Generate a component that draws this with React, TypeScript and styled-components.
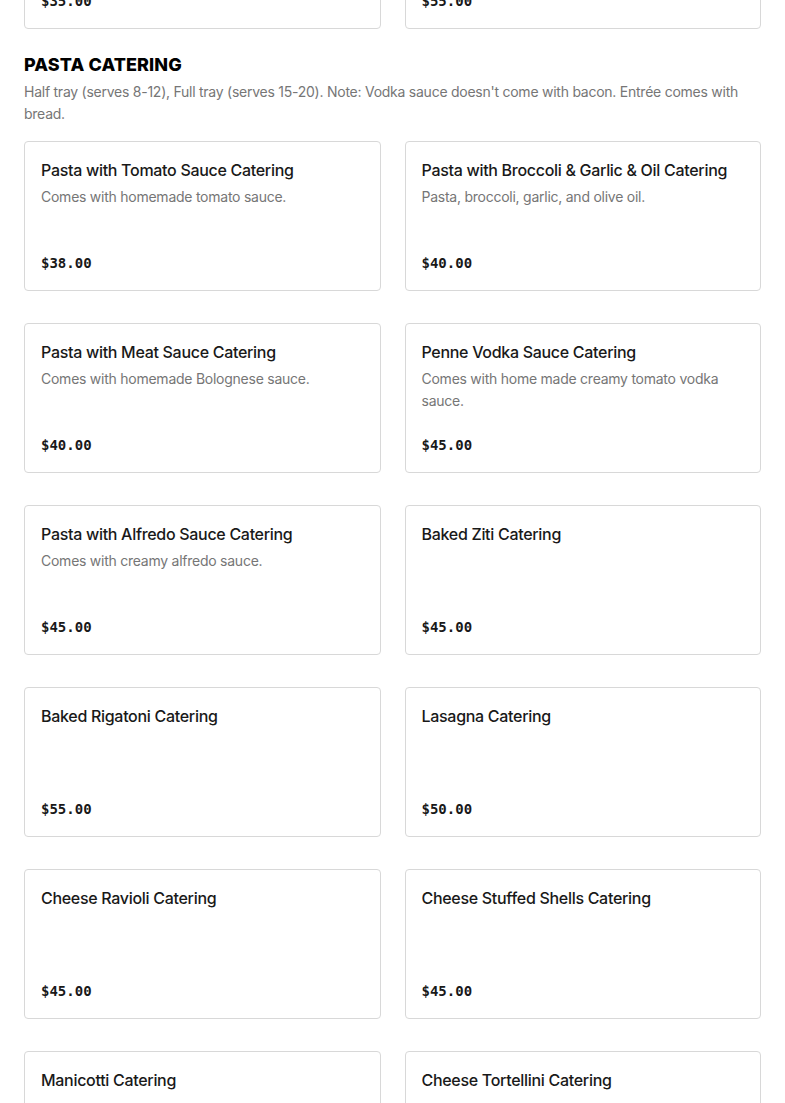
import React from 'react';
import styled, { createGlobalStyle } from 'styled-components';

const GlobalStyle = createGlobalStyle`
  html, body {
    margin: 0;
    padding: 0;
    background: #ffffff;
  }
  body {
    font-family: Inter, "Noto Sans", "Liberation Sans", sans-serif;
    color: #191919;
  }
`;

const Page = styled.div`
  padding: 0 24px 40px;
  margin-top: -121px;
`;

const Section = styled.section`
  margin-bottom: 24px;
`;

const SectionTitle = styled.h2`
  margin: 0;
  font-family: Inter, "Liberation Sans", sans-serif;
  font-size: 18px;
  font-weight: 800;
  line-height: 24px;
  letter-spacing: 0.1px;
  text-transform: uppercase;
  color: #000;
`;

const SectionNote = styled.p`
  margin: 4px 0 16px;
  font-size: 14px;
  line-height: 22px;
  letter-spacing: -0.25px;
  color: #767676;
`;

const Grid = styled.div`
  display: grid;
  grid-template-columns: 1fr 1fr;
  column-gap: 24px;
  row-gap: 32px;
`;

const Card = styled.div`
  display: flex;
  flex-direction: column;
  box-sizing: border-box;
  height: 150px;
  padding: 16px 16px 17px;
  border: 1px solid #d8d8d8;
  border-radius: 4px;
  background: #fff;
`;

const ItemName = styled.div`
  font-size: 16px;
  font-weight: 500;
  line-height: 24px;
  letter-spacing: -0.3px;
  color: #191919;
`;

const ItemDesc = styled.div`
  margin-top: 4px;
  font-size: 14px;
  line-height: 22px;
  letter-spacing: -0.25px;
  color: #767676;
`;

const Price = styled.div`
  margin-top: auto;
  font-family: "DejaVu Sans Mono", "Liberation Mono", monospace;
  font-size: 14px;
  font-weight: 700;
  line-height: 20px;
  color: #191919;
`;

interface Item {
  name: string;
  desc?: string;
  price: string;
}

const prevItems: Item[] = [
  { name: 'Eggplant Rollatini Catering', price: '$35.00' },
  { name: 'Chicken Parmigiana Catering', price: '$55.00' },
];

const pastaItems: Item[] = [
  { name: 'Pasta with Tomato Sauce Catering', desc: 'Comes with homemade tomato sauce.', price: '$38.00' },
  { name: 'Pasta with Broccoli & Garlic & Oil Catering', desc: 'Pasta, broccoli, garlic, and olive oil.', price: '$40.00' },
  { name: 'Pasta with Meat Sauce Catering', desc: 'Comes with homemade Bolognese sauce.', price: '$40.00' },
  { name: 'Penne Vodka Sauce Catering', desc: 'Comes with home made creamy tomato vodka sauce.', price: '$45.00' },
  { name: 'Pasta with Alfredo Sauce Catering', desc: 'Comes with creamy alfredo sauce.', price: '$45.00' },
  { name: 'Baked Ziti Catering', price: '$45.00' },
  { name: 'Baked Rigatoni Catering', price: '$55.00' },
  { name: 'Lasagna Catering', price: '$50.00' },
  { name: 'Cheese Ravioli Catering', price: '$45.00' },
  { name: 'Cheese Stuffed Shells Catering', price: '$45.00' },
  { name: 'Manicotti Catering', price: '$45.00' },
  { name: 'Cheese Tortellini Catering', price: '$45.00' },
];

const MenuCard: React.FC<{ item: Item }> = ({ item }) => (
  <Card>
    <ItemName>{item.name}</ItemName>
    {item.desc && <ItemDesc>{item.desc}</ItemDesc>}
    <Price>{item.price}</Price>
  </Card>
);

const App: React.FC = () => {
  return (
    <>
      <GlobalStyle />
      <Page>
        <Section>
          <Grid>
            {prevItems.map((item) => (
              <MenuCard key={item.name} item={item} />
            ))}
          </Grid>
        </Section>
        <Section>
          <SectionTitle>Pasta Catering</SectionTitle>
          <SectionNote>
            Half tray (serves 8-12), Full tray (serves 15-20). Note: Vodka sauce doesn't come with bacon. Entrée comes with bread.
          </SectionNote>
          <Grid>
            {pastaItems.map((item) => (
              <MenuCard key={item.name} item={item} />
            ))}
          </Grid>
        </Section>
      </Page>
    </>
  );
};

export default App;
